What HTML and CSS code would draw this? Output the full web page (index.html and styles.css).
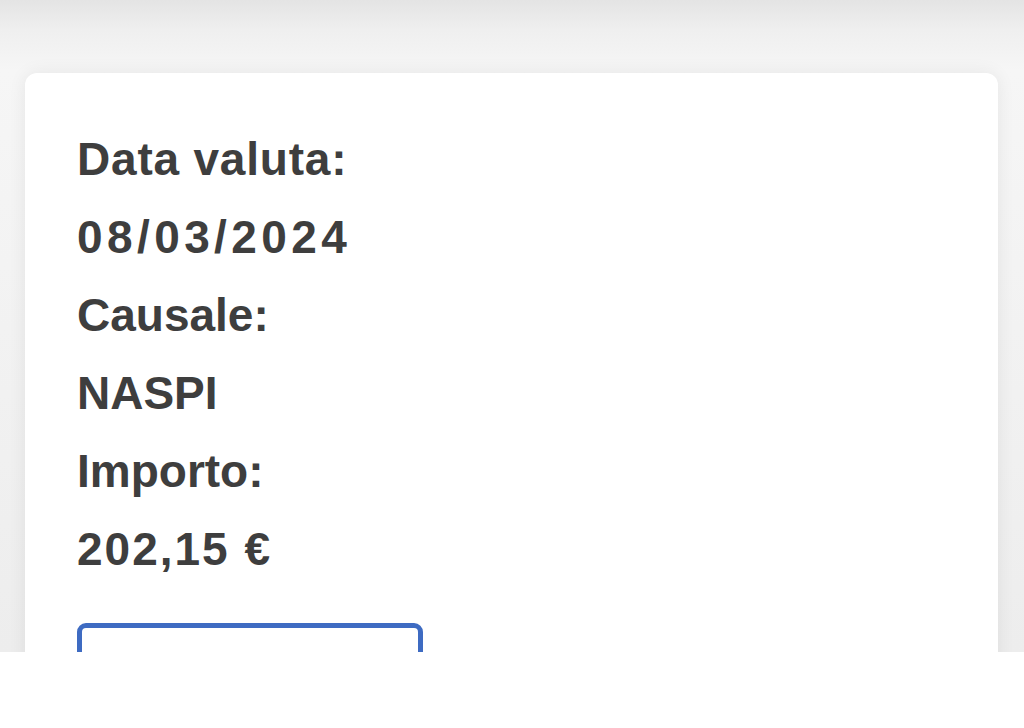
FILE: index.html
```html
<!DOCTYPE html>
<html lang="it">
<head>
<meta charset="utf-8">
<title>Dettaglio pagamento</title>
<link rel="stylesheet" href="styles.css">
</head>
<body>
<div class="viewport">
  <main class="page">
    <section class="card">
      <div class="label">Data valuta:</div>
      <div class="value num">08/03/2024</div>
      <div class="label">Causale:</div>
      <div class="value">NASPI</div>
      <div class="label">Importo:</div>
      <div class="value amount">202,15 €</div>
      <button class="btn" type="button"></button>
    </section>
  </main>
  <footer class="bottom"></footer>
</div>
</body>
</html>
```

FILE: styles.css
```css
html, body {
  margin: 0;
  padding: 0;
}
body {
  width: 1024px;
  height: 728px;
  overflow: hidden;
  font-family: "Liberation Sans", Arial, sans-serif;
  background: #ffffff;
}
.viewport {
  display: flex;
  flex-direction: column;
  height: 728px;
}
.page {
  height: 652px;
  overflow: hidden;
  background: linear-gradient(to bottom, #e4e4e4 0px, #efefef 30px, #f6f6f6 70px, #ededed 100%);
  padding: 73px 26px 0 25px;
  box-sizing: border-box;
}
.card {
  background: #ffffff;
  border-radius: 12px;
  box-shadow: 0 0 18px rgba(0, 0, 0, 0.07);
  padding: 47px 50px 60px 52px;
  min-height: 700px;
  box-sizing: border-box;
  display: flex;
  flex-direction: column;
  align-items: flex-start;
}
.label, .value {
  font-size: 46px;
  font-weight: 700;
  line-height: 78px;
  color: #3e3e3e;
}
.label:first-child {
  letter-spacing: 0.8px;
}
.num {
  letter-spacing: 4.4px;
}
.amount {
  letter-spacing: 2px;
}
.btn {
  margin-top: 35px;
  width: 346px;
  height: 80px;
  border: 5px solid #3e6bc2;
  border-radius: 9px;
  background: #ffffff;
  padding: 0;
}
.bottom {
  height: 76px;
  background: #ffffff;
}
```
